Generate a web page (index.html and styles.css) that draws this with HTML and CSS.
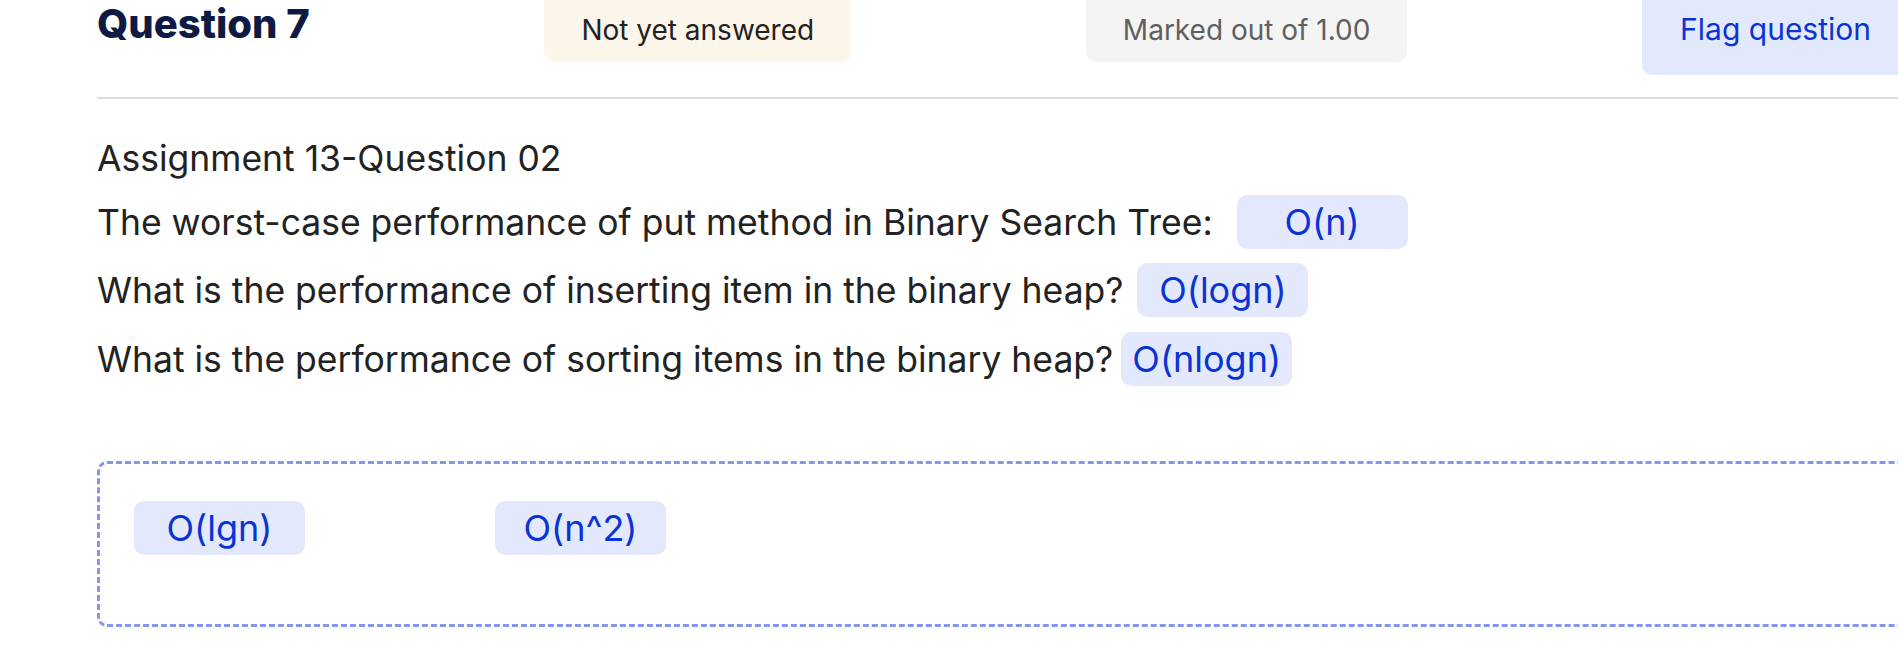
FILE: index.html
```html
<!DOCTYPE html>
<html lang="en">
<head>
<meta charset="utf-8">
<title>Question 7</title>
<link rel="stylesheet" href="styles.css">
</head>
<body>
<div class="page">
  <div class="que-header">
    <h3 class="qno">Question 7</h3>
    <div class="badge badge-state">Not yet answered</div>
    <div class="badge badge-grade">Marked out of 1.00</div>
    <a class="flag" href="#">Flag question</a>
  </div>
  <hr class="divider">
  <div class="content">
    <p class="title">Assignment 13-Question 02</p>
    <p class="row">The worst-case performance of put method in Binary Search Tree: <span class="chip">O(n)</span></p>
    <p class="row">What is the performance of inserting item in the binary heap?<span class="chip">O(logn)</span></p>
    <p class="row">What is the performance of sorting items in the binary heap?<span class="chip chip-tight">O(nlogn)</span></p>
    <div class="dragbox">
      <span class="chip chip-drag">O(lgn)</span>
      <span class="chip chip-drag">O(n^2)</span>
    </div>
  </div>
</div>
</body>
</html>
```

FILE: styles.css
```css
html, body {
  margin: 0;
  padding: 0;
  background: #ffffff;
  overflow: hidden;
}

body {
  font-family: "Inter", "Liberation Sans", sans-serif;
  color: #222222;
}

.page {
  margin-left: 97px;
  width: 1812px;
}

.que-header {
  display: flex;
  justify-content: space-between;
  align-items: flex-start;
}

.qno {
  margin: 0;
  font-size: 40px;
  line-height: 48px;
  font-weight: 800;
  color: #0e1a44;
}

.badge {
  box-sizing: border-box;
  height: 62px;
  padding: 13px 37px 0;
  border-radius: 0 0 10px 10px;
  font-size: 28px;
  line-height: normal;
}

.badge-state {
  background: #fcf5ea;
  color: #222222;
}

.badge-grade {
  background: #f4f4f4;
  color: #5f5f5f;
}

.flag {
  display: block;
  box-sizing: border-box;
  height: 75px;
  padding: 11px 38px 0;
  border-radius: 0 0 0 10px;
  background: #e3e9fc;
  color: #0a33d6;
  font-size: 30px;
  line-height: normal;
  text-decoration: none;
}

.divider {
  margin: 22px 0 0;
  border: 0;
  height: 2px;
  background: #dedede;
}

.content {
  padding-top: 38px;
}

.title,
.row {
  margin: 0 0 14.5px;
  font-size: 35.5px;
  line-height: normal;
  color: #222222;
}

.chip {
  display: inline-block;
  box-sizing: border-box;
  min-width: 171px;
  height: 54px;
  padding: 5px 10px 0;
  margin-left: 14px;
  border-radius: 10px;
  background: #e3e8fc;
  color: #0a33d6;
  font-size: 36px;
  line-height: normal;
  text-align: center;
  vertical-align: baseline;
}

.chip-tight {
  margin-left: 8px;
}

.dragbox {
  box-sizing: border-box;
  height: 166px;
  margin-top: 75px;
  padding: 37px 34px 0;
  border: 3px dashed #8396ec;
  border-radius: 10px;
  display: flex;
  align-items: flex-start;
  gap: 190px;
}

.chip-drag {
  margin-left: 0;
}
```
